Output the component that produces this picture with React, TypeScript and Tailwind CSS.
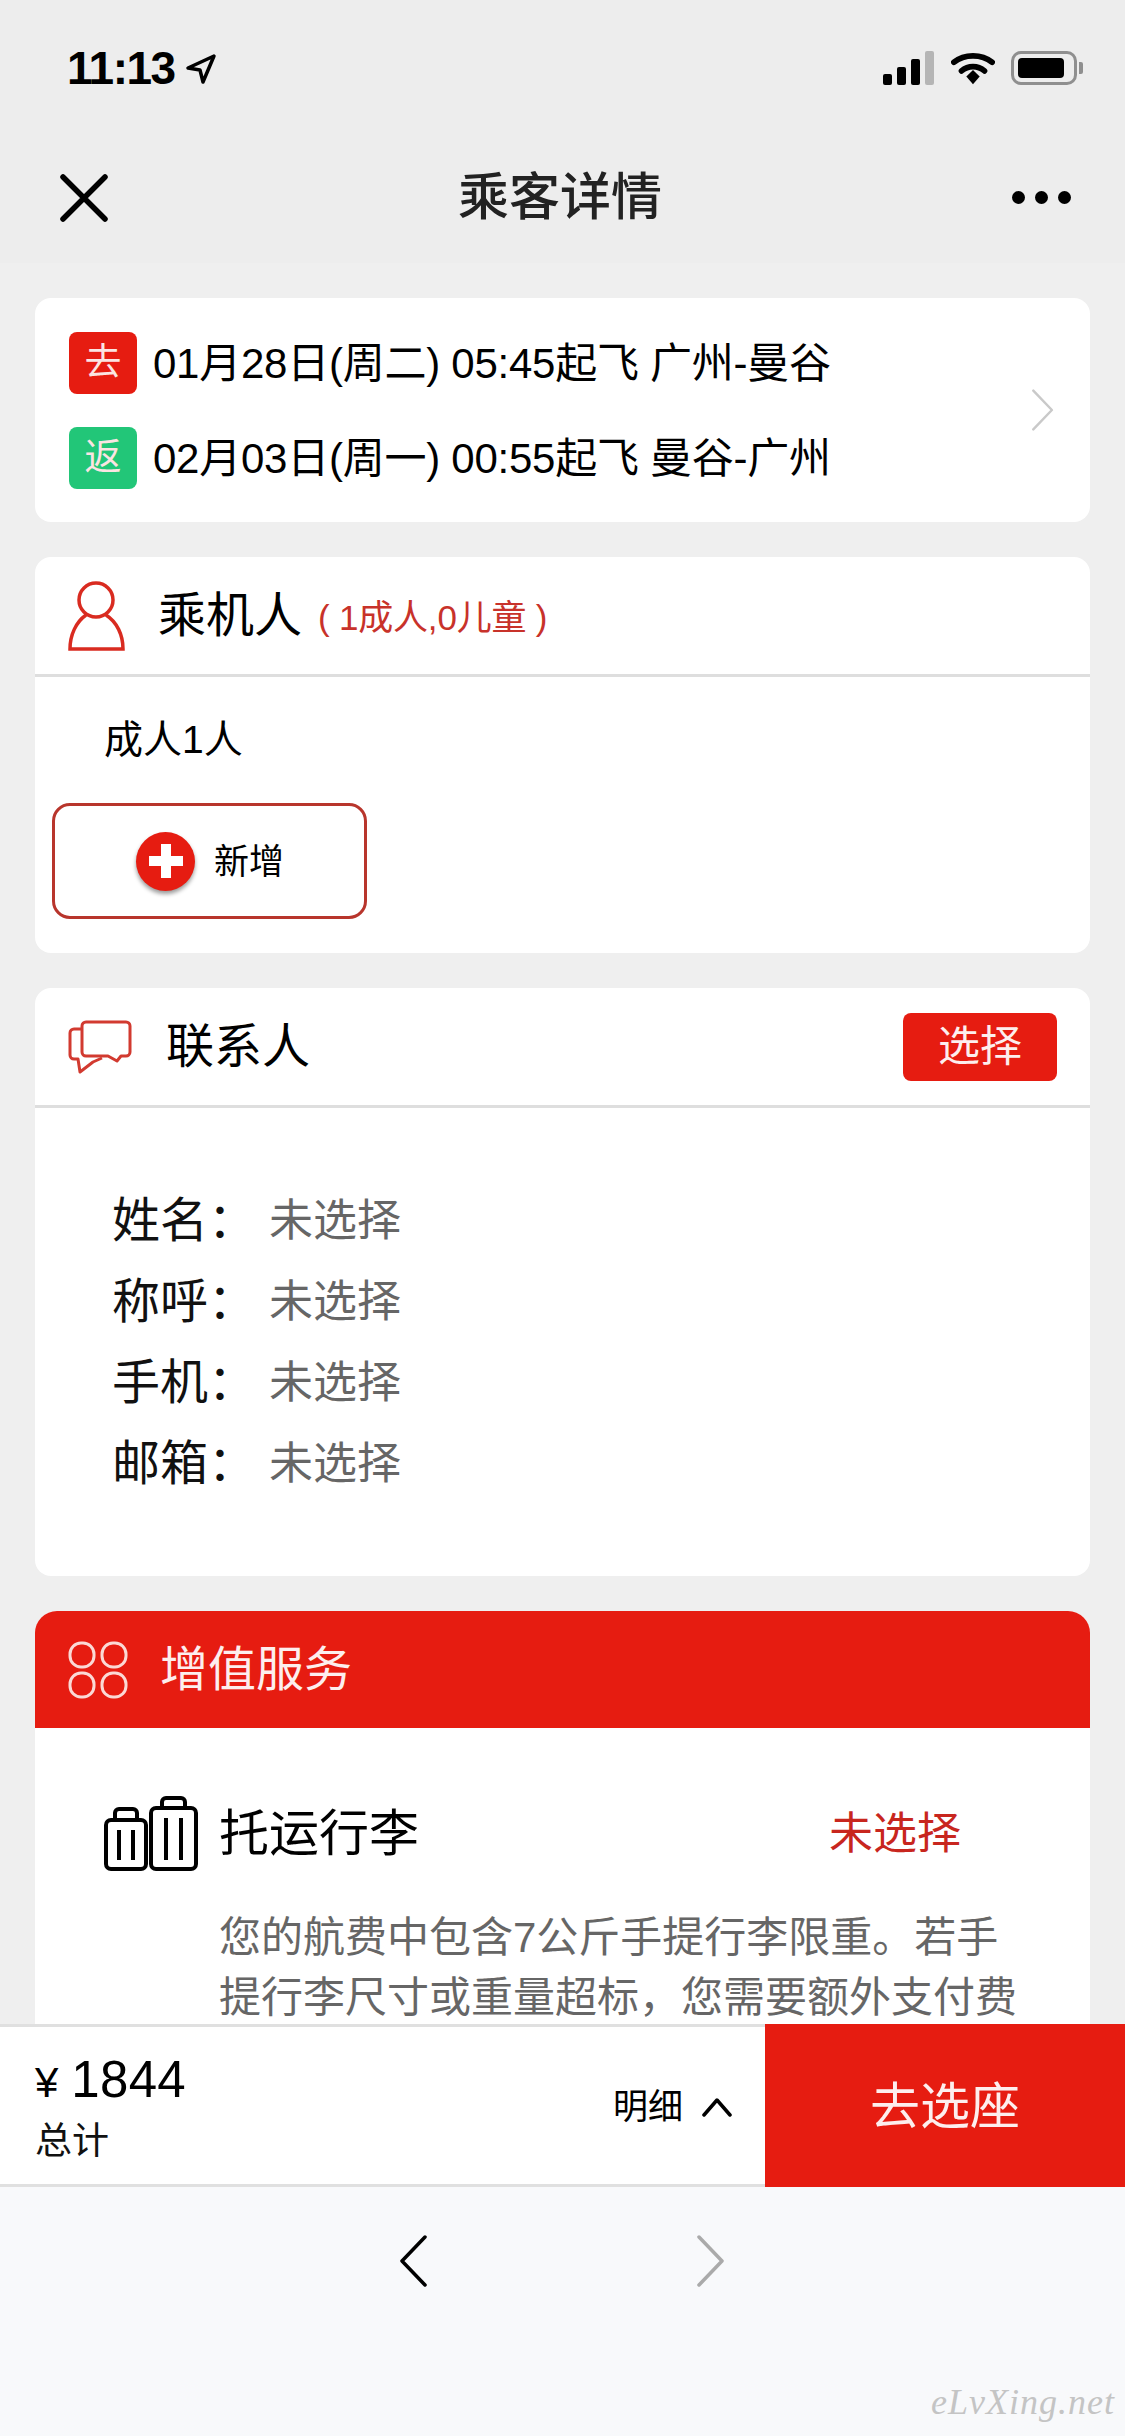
const RED = "bg-[#e61c11]";

const StatusBar = () => (
    <div className="h-[132px] flex items-center justify-between pl-[67px] pr-[42px] pt-[4px]">
        <div className="flex items-center gap-[10px]">
            <span className="text-[46px] leading-none font-semibold text-black tracking-[-1.5px]">11:13</span>
            <svg width="32" height="32" viewBox="0 0 32 32" fill="none" className="mt-[2px]">
                <path d="M29 3 3 15l12 2 3 12z" stroke="#000" strokeWidth="3.5" strokeLinejoin="round" />
            </svg>
        </div>
        <div className="flex items-center gap-[16px]">
            <svg width="52" height="34" viewBox="0 0 52 34">
                <rect x="0" y="23" width="9" height="11" rx="2" fill="#000" />
                <rect x="14" y="16" width="9" height="18" rx="2" fill="#000" />
                <rect x="28" y="8" width="9" height="26" rx="2" fill="#000" />
                <rect x="42" y="0" width="9" height="34" rx="2" fill="#b5b5b5" />
            </svg>
            <svg width="44" height="34" viewBox="0 0 46 34" fill="none">
                <path d="M3 11c11-9 29-9 40 0" stroke="#000" strokeWidth="6" strokeLinecap="round" />
                <path d="M11 20c7-6 17-6 24 0" stroke="#000" strokeWidth="6" strokeLinecap="round" />
                <path d="M16 26l7-7 7 7-7 8z" fill="#000" />
            </svg>
            <div className="flex items-center gap-[2px]">
                <div className="w-[66px] h-[34px] rounded-[10px] border-[3px] border-[#8f8f8f] p-[4px]">
                    <div className="w-[46px] h-full rounded-[4px] bg-black" />
                </div>
                <div className="w-[4px] h-[12px] rounded-r-[2px] bg-[#8f8f8f]" />
            </div>
        </div>
    </div>
);

const NavBar = () => (
    <div className="h-[131px] flex items-center justify-between pl-[60px] pr-[54px]">
        <svg width="48" height="48" viewBox="0 0 48 48" fill="none">
            <path d="M3 3l42 42M45 3 3 45" stroke="#000" strokeWidth="5.5" strokeLinecap="round" />
        </svg>
        <span className="text-[51px] leading-none font-medium text-[#222]">乘客详情</span>
        <div className="flex items-center gap-[10px]">
            <div className="w-[13px] h-[13px] rounded-full bg-black" />
            <div className="w-[13px] h-[13px] rounded-full bg-black" />
            <div className="w-[13px] h-[13px] rounded-full bg-black" />
        </div>
    </div>
);

const RouteRow = ({ tag, color, text }: { tag: string; color: string; text: string }) => (
    <div className="flex items-center gap-[16px]">
        <span className={`w-[68px] h-[62px] rounded-[8px] flex items-center justify-center text-[37px] text-[#fbe4e2] ${color}`}>
            {tag}
        </span>
        <span className="pt-[2px] text-[42px] leading-none text-black tracking-[-0.25px]">{text}</span>
    </div>
);

const ContactRow = ({ label }: { label: string }) => (
    <div className="h-[81px] flex items-center">
        <span className="w-[157px] text-[48px] leading-none text-[#111]">{label}：</span>
        <span className="text-[44px] leading-none text-[#666]">未选择</span>
    </div>
);

const PersonIcon = () => (
    <svg width="58" height="70" viewBox="0 0 58 70" fill="none" stroke="#d92b20" strokeWidth="3.5">
        <circle cx="28" cy="19" r="17" />
        <path d="M18 34C8 41 2 54 2 68h53c0-14-6-27-17-34" />
    </svg>
);

const ChatIcon = () => (
    <svg width="64" height="54" viewBox="0 0 64 54" fill="none" stroke="#d23a30" strokeWidth="3" strokeLinejoin="round">
        <path d="M18 2h40a4 4 0 0 1 4 4v26a4 4 0 0 1-4 4h-5l-4 5-9-5H18a4 4 0 0 1-4-4V6a4 4 0 0 1 4-4z" />
        <path d="M14 9H6a4 4 0 0 0-4 4v22a4 4 0 0 0 4 4h4l2 13 13-10 9-4" />
    </svg>
);

const GridIcon = () => (
    <svg width="60" height="58" viewBox="0 0 60 58" fill="none" stroke="#fbd9d6" strokeWidth="3">
        <rect x="2" y="2" width="24" height="24" rx="11" />
        <rect x="34" y="2" width="24" height="24" rx="11" />
        <rect x="2" y="32" width="24" height="24" rx="11" />
        <rect x="34" y="32" width="24" height="24" rx="11" />
    </svg>
);

const LuggageIcon = () => (
    <svg width="94" height="76" viewBox="0 0 94 76" fill="none" stroke="#000" strokeWidth="4">
        <rect x="2" y="24" width="40" height="49" rx="5" />
        <path d="M11 24v-7a4 4 0 0 1 4-4h14a4 4 0 0 1 4 4v7M15 34v30M29 34v30" />
        <rect x="47" y="12" width="45" height="61" rx="5" />
        <path d="M58 12V6a4 4 0 0 1 4-4h15a4 4 0 0 1 4 4v6M62 22v42M77 22v42" />
    </svg>
);

const Chevron = ({ color, flip, w, h, stroke }: { color: string; flip?: boolean; w: number; h: number; stroke: number }) => (
    <svg width={w} height={h} viewBox="0 0 28 52" fill="none" className={flip ? "-scale-x-100" : ""}>
        <path d="M2 2l23 24L2 50" stroke={color} strokeWidth={stroke} strokeLinecap="round" strokeLinejoin="round" />
    </svg>
);

const App = () => {
    return (
        <div className="w-[1125px] h-[2436px] flex flex-col overflow-hidden bg-[#efefef] font-['Liberation_Sans','Noto_Sans_CJK_SC',sans-serif]">
            <header className="shrink-0 bg-[#ededed]">
                <StatusBar />
                <NavBar />
            </header>

            <main className="flex-1 min-h-0 overflow-hidden px-[35px] pt-[35px] flex flex-col gap-[35px]">
                {/* Flight summary */}
                <section className="shrink-0 h-[224px] rounded-[16px] bg-white pl-[34px] pr-[35px] flex items-center justify-between">
                    <div className="flex flex-col gap-[33px]">
                        <RouteRow tag="去" color={RED} text="01月28日(周二) 05:45起飞 广州-曼谷" />
                        <RouteRow tag="返" color="bg-[#22c678]" text="02月03日(周一) 00:55起飞 曼谷-广州" />
                    </div>
                    <Chevron color="#c9c9c9" w={24} h={42} stroke={3} />
                </section>

                {/* Passengers */}
                <section className="shrink-0 h-[396px] rounded-[16px] bg-white">
                    <div className="h-[120px] border-b-[3px] border-[#dedede] flex items-center pl-[33px]">
                        <PersonIcon />
                        <span className="ml-[32px] text-[48px] leading-none text-black">乘机人</span>
                        <span className="ml-[16px] mt-[4px] text-[35px] leading-none text-[#c8322a] tracking-[-0.2px]">( 1成人,0儿童 )</span>
                    </div>
                    <div className="h-[126px] flex items-center pl-[69px] pb-[2px]">
                        <span className="text-[39px] leading-none text-black">成人1人</span>
                    </div>
                    <button className="ml-[17px] w-[315px] h-[116px] rounded-[18px] border-[3px] border-[#b8352c] flex items-center pl-[81px] gap-[19px]">
                        <span className="w-[59px] h-[59px] rounded-full bg-[#e61c11] shadow-[0_3px_4px_rgba(0,0,0,0.4)] flex items-center justify-center">
                            <svg width="36" height="36" viewBox="0 0 36 36">
                                <path d="M13 1h10v12h12v10H23v12H13V23H1V13h12z" fill="#fff" />
                            </svg>
                        </span>
                        <span className="text-[35px] leading-none text-black">新增</span>
                    </button>
                </section>

                {/* Contact */}
                <section className="shrink-0 h-[588px] rounded-[16px] bg-white">
                    <div className="h-[120px] border-b-[3px] border-[#dedede] flex items-center pl-[33px] pr-[33px]">
                        <ChatIcon />
                        <span className="ml-[34px] text-[48px] leading-none text-black">联系人</span>
                        <button className="ml-auto w-[154px] h-[68px] rounded-[8px] bg-[#e61c11] text-[42px] leading-none text-[#fdeeee]">
                            选择
                        </button>
                    </div>
                    <div className="pl-[77px] pt-[72px]">
                        <ContactRow label="姓名" />
                        <ContactRow label="称呼" />
                        <ContactRow label="手机" />
                        <ContactRow label="邮箱" />
                    </div>
                </section>

                {/* Value added services */}
                <section className="shrink-0 rounded-t-[22px] bg-white h-[500px]">
                    <div className="h-[117px] rounded-t-[22px] bg-[#e61c11] flex items-center pl-[33px]">
                        <GridIcon />
                        <span className="ml-[32px] text-[48px] leading-none text-[#fdeeee]">增值服务</span>
                    </div>
                    <div className="pt-[68px] pl-[69px]">
                        <div className="flex items-center w-[857px] justify-between">
                            <div className="flex items-center gap-[21px]">
                                <LuggageIcon />
                                <span className="text-[50px] leading-none text-black">托运行李</span>
                            </div>
                            <span className="text-[44px] leading-none text-[#c8261e]">未选择</span>
                        </div>
                        <p className="mt-[36px] ml-[115px] w-[800px] text-[42px] leading-[60px] text-[#666]">
                            您的航费中包含7公斤手提行李限重。若手提行李尺寸或重量超标，您需要额外支付费
                        </p>
                    </div>
                </section>
            </main>

            {/* Total bar */}
            <div className="shrink-0 h-[163px] flex bg-white">
                <div className="flex-1 border-t-[3px] border-b-[3px] border-[#e0e0e0] flex items-center justify-between pl-[35px] pr-[33px]">
                    <div className="flex flex-col gap-[18px] pt-[2px]">
                        <div className="flex items-end text-black leading-none">
                            <span className="text-[42px] leading-none mr-[13px] mb-[1px]">¥</span>
                            <span className="text-[51px] leading-none tracking-[0.3px]">1844</span>
                        </div>
                        <span className="text-[37px] leading-none text-[#111]">总计</span>
                    </div>
                    <div className="flex items-center gap-[19px] pt-[2px]">
                        <span className="text-[35px] leading-none text-black">明细</span>
                        <svg width="30" height="20" viewBox="0 0 30 20" fill="none">
                            <path d="M2 18 15 3l13 15" stroke="#000" strokeWidth="3.5" strokeLinecap="round" strokeLinejoin="round" />
                        </svg>
                    </div>
                </div>
                <button className="w-[360px] pt-[3px] bg-[#e61c11] text-[50px] leading-none text-[#fdeeee]">去选座</button>
            </div>

            {/* Browser toolbar */}
            <div className="relative shrink-0 h-[249px] bg-[#f8f9fb] flex justify-center gap-[270px] pt-[48px] pr-[1px]">
                <Chevron color="#000" flip w={28} h={52} stroke={3.5} />
                <Chevron color="#aaaaaa" w={28} h={52} stroke={3.5} />
                <span className="absolute right-[10px] bottom-[16px] font-['Liberation_Serif',serif] italic text-[36px] leading-none tracking-[1px] text-[#c4c4c4]">
                    eLvXing.net
                </span>
            </div>
        </div>
    );
};

export default App;
